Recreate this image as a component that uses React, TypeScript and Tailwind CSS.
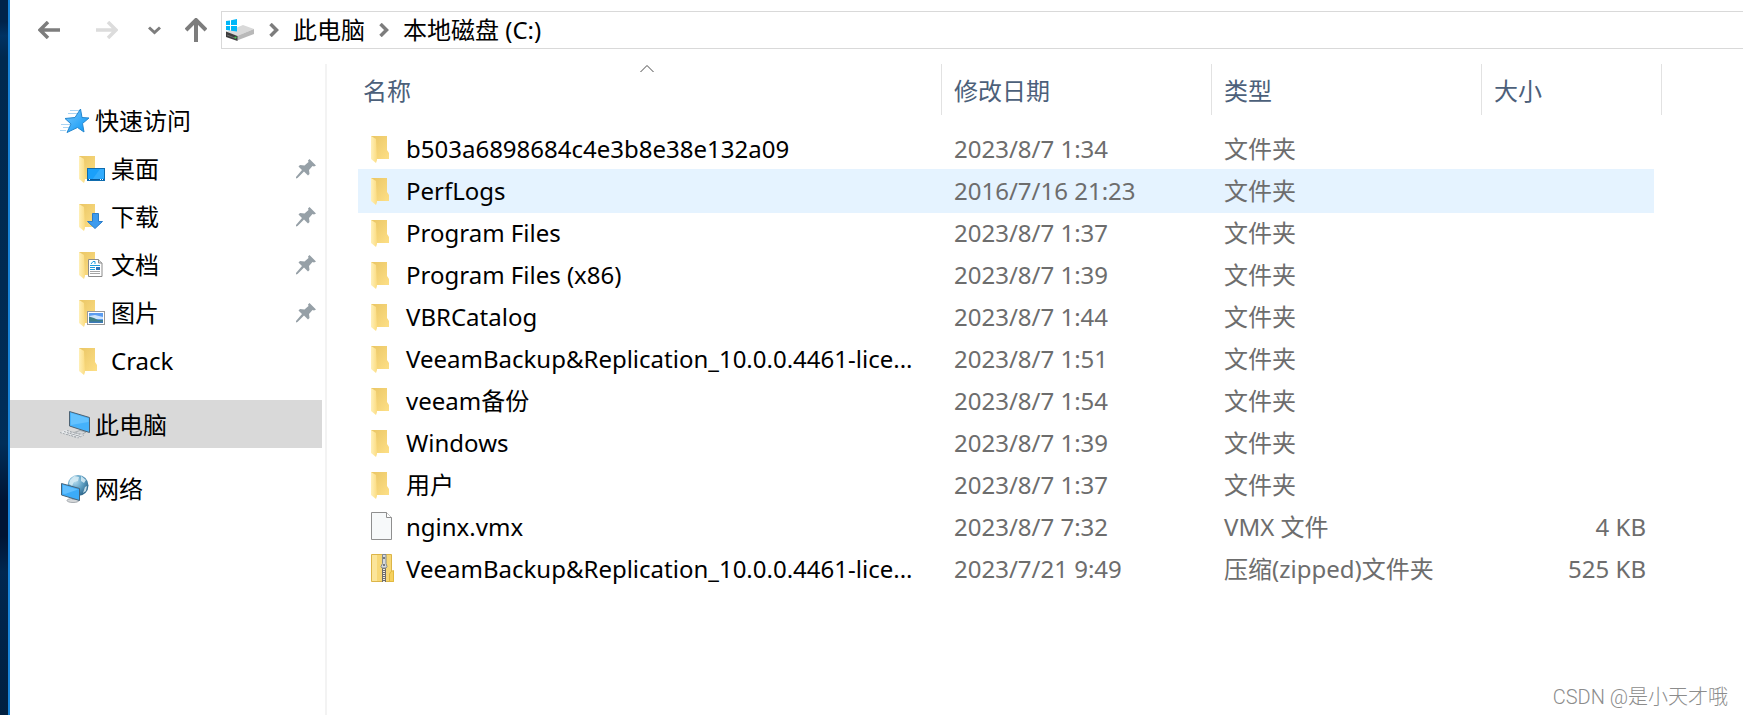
import { useId, useState } from "react";
import type { ReactNode } from "react";

type EntryKind = "folder" | "file" | "zip";

type Entry = {
  name: string;
  modified: string;
  type: string;
  size?: string;
  kind: EntryKind;
};

const entries: Entry[] = [
  { name: "b503a6898684c4e3b8e38e132a09", modified: "2023/8/7 1:34", type: "文件夹", kind: "folder" },
  { name: "PerfLogs", modified: "2016/7/16 21:23", type: "文件夹", kind: "folder" },
  { name: "Program Files", modified: "2023/8/7 1:37", type: "文件夹", kind: "folder" },
  { name: "Program Files (x86)", modified: "2023/8/7 1:39", type: "文件夹", kind: "folder" },
  { name: "VBRCatalog", modified: "2023/8/7 1:44", type: "文件夹", kind: "folder" },
  { name: "VeeamBackup&Replication_10.0.0.4461-lice...", modified: "2023/8/7 1:51", type: "文件夹", kind: "folder" },
  { name: "veeam备份", modified: "2023/8/7 1:54", type: "文件夹", kind: "folder" },
  { name: "Windows", modified: "2023/8/7 1:39", type: "文件夹", kind: "folder" },
  { name: "用户", modified: "2023/8/7 1:37", type: "文件夹", kind: "folder" },
  { name: "nginx.vmx", modified: "2023/8/7 7:32", type: "VMX 文件", size: "4 KB", kind: "file" },
  { name: "VeeamBackup&Replication_10.0.0.4461-lice...", modified: "2023/7/21 9:49", type: "压缩(zipped)文件夹", size: "525 KB", kind: "zip" },
];

function FolderIcon({ children }: { children?: ReactNode }) {
  const id = useId();
  return (
    <svg width="28" height="30" viewBox="0 -2 28 30" className="shrink-0" aria-hidden="true">
      <defs>
        <linearGradient id={`${id}b`} x1="0" y1="0" x2="1" y2="1">
          <stop offset="0" stopColor="#eac665" />
          <stop offset="1" stopColor="#fddf86" />
        </linearGradient>
        <linearGradient id={`${id}f`} x1="0" y1="0" x2="1" y2="0">
          <stop offset="0" stopColor="#fff0b8" />
          <stop offset="1" stopColor="#fbdc82" />
        </linearGradient>
      </defs>
      <path d="M0 0h16v14l2 3v6H0z" fill={`url(#${id}b)`} />
      <path d="M0 0l5 3 1 21-1 3-5-4z" fill={`url(#${id}f)`} />
      {children}
    </svg>
  );
}

function DesktopBadge() {
  return (
    <>
      <rect x="8.5" y="12.5" width="17" height="12" fill="#1aa0fb" stroke="#0f6cae" />
      <path d="M13 24L21 13h4v9z" fill="#45b4ff" opacity=".6" />
      <path d="M9 23.500h16" stroke="#0a5a9c" />
      <path d="M10 23.500h1M21 23.500h1M23 23.500h1" stroke="#fff" />
    </>
  );
}

function DownloadBadge() {
  return <path d="M13.500 9.500h6v8h4l-7.500 7-7.500-7h5z" fill="#3d9bee" stroke="#2a7dcb" />;
}

function DocumentBadge() {
  return (
    <>
      <path d="M9.500 7.500h10l3.500 3.500v13.500H9.500z" fill="#fff" stroke="#8b8b8b" />
      <path d="M19.500 7.500V11H23" fill="#ddd" stroke="#8b8b8b" />
      <path d="M12 12l2-2.500h2V12M11 13.500h10M11 15.500h5M11 17.500h5" stroke="#1e9bdc" fill="none" />
      <path d="M11 19.500h10M11 21.500h10" stroke="#a5a5a5" />
      <rect x="17" y="15" width="4" height="3" fill="#2d72b8" />
    </>
  );
}

function PictureBadge() {
  return (
    <>
      <rect x="8.500" y="11.500" width="17" height="13" fill="#fff" stroke="#999" />
      <rect x="10" y="13" width="14" height="10" fill="#5b9cf0" />
      <path d="M10 16l6-1 8 2v2H10z" fill="#cde4fb" />
      <path d="M10 16.500l5 1.500 4 2h5v3H10z" fill="#3f7f83" />
      <path d="M10 21.500h14V23H10z" fill="#3c79b9" />
    </>
  );
}

function FileIcon() {
  return (
    <svg width="22" height="30" viewBox="0 0 22 30" className="shrink-0" aria-hidden="true">
      <path d="M.5.5h15l5 5v22H.5z" fill="#f7f9fa" stroke="#8f8f8f" />
      <path d="M15.500.5v5h5" fill="#fff" stroke="#8f8f8f" />
    </svg>
  );
}

function ZipIcon() {
  return (
    <svg width="24" height="30" viewBox="0 0 24 30" className="shrink-0" aria-hidden="true">
      <path d="M.5.5h20V17l2 1v9.500H.5z" fill="#f7d877" stroke="#dcb548" />
      <path d="M1 1h5v26H1z" fill="#fbe59a" />
      <path d="M20 17.500l2.500-1v11H18.500V20z" fill="#f6d15e" stroke="#e2b93f" />
      <path d="M13 13v15" stroke="#6d6d6d" strokeWidth="4" />
      <path d="M13 13v15" stroke="#f4efe0" strokeWidth="2" strokeDasharray="1 1" />
      <path d="M11.500 .5h3.500v9l1 3-1 1.500h-4L10 12.500l1.500-3z" fill="#d6dade" stroke="#84898e" />
      <path d="M13 3v2M13 10v2" stroke="#55595d" strokeWidth="1.500" />
    </svg>
  );
}

function StarIcon() {
  return (
    <svg width="30" height="26" viewBox="0 0 30 26" aria-hidden="true">
      <defs>
        <linearGradient id="star" x1="0" y1="0" x2="1" y2="1">
          <stop offset="0" stopColor="#79c8fd" />
          <stop offset="1" stopColor="#0795f5" />
        </linearGradient>
      </defs>
      <path d="M10 2.500h10M8 5.500h9M1 16.500h9M3 19.500h6M0 22.500h6" stroke="#a9d4f3" />
      <path d="M20.500 1l1.500 8.500 7 .5-6.500 5.500 1.500 8.500-6.500-4.500L7 24.500l4-8.500L5 10.500l10-1z" fill="url(#star)" stroke="#2487cf" strokeLinejoin="round" />
    </svg>
  );
}

function ComputerIcon() {
  return (
    <svg width="32" height="30" viewBox="0 0 32 30" aria-hidden="true">
      <path d="M15 22.500l6-2 6 1.500-4 2.500z" fill="#d4d7da" stroke="#91969b" strokeWidth=".7" />
      <path d="M10.500 1.500l20 6v15l-20-6.500z" fill="#45b2fb" stroke="#4d6273" />
      <path d="M12 3l17.500 5.500V12L12 15z" fill="#6cc5ff" opacity=".8" />
      <path d="M1 22.500l5-2.500 19 5-6 3.500z" fill="#e7e9eb" />
      <path d="M1 22.500l18 5.500 6-3M5 21.500l16 5M8 20.500l14 4M8 24.500l6-2.500M12 25.500l6-2.500M15 27l6-2.500" stroke="#a4a9ae" strokeDasharray="2 1" fill="none" />
    </svg>
  );
}

function NetworkIcon() {
  return (
    <svg width="30" height="30" viewBox="0 0 30 30" aria-hidden="true">
      <defs>
        <radialGradient id="globe" cx=".35" cy=".3" r=".8">
          <stop offset="0" stopColor="#b5dcef" />
          <stop offset=".5" stopColor="#5d9fc3" />
          <stop offset="1" stopColor="#235b80" />
        </radialGradient>
      </defs>
      <circle cx="18" cy="11.500" r="10.500" fill="url(#globe)" />
      <path d="M10 6l4-4 5 1-1 4-4 1-2 4-3-2zM21 2l5 4-2 3-3-2zM25 13l2-1-1 5-3 2z" fill="#d8edf6" opacity=".85" />
      <ellipse cx="13" cy="26.500" rx="6" ry="2" fill="#d5d8da" stroke="#959ca2" strokeWidth=".8" />
      <path d="M12 23h3v3h-3z" fill="#b3b9be" />
      <path d="M1.500 9.500l18 5v12l-18-5.500z" fill="#3cabf8" stroke="#466379" />
      <path d="M3 11l15 4.500L5 20l-2-.5z" fill="#6bc4ff" opacity=".8" />
    </svg>
  );
}

function DriveIcon() {
  return (
    <svg width="30" height="24" viewBox="0 0 30 24" className="shrink-0" aria-hidden="true">
      <path d="M1 14L18 7l11 4-17 7z" fill="#d9d9d9" />
      <path d="M12 18l17-7v5l-17 6.500z" fill="#b9b9b9" />
      <path d="M1 13.500l11.500 4.500v5L1 19z" fill="#3c3c3c" />
      <path d="M2 17l9 3.500" stroke="#6b6b6b" />
      <path d="M9.500 19.500h2" stroke="#3ed24a" strokeWidth="1.500" />
      <path d="M1 3l4-.5V7H1zM6 2.300L12 1v6H6zM1 8h4v4.500L1 12zM6 8h6v5.500l-6-.8z" fill="#00b7f8" />
    </svg>
  );
}

function PinIcon() {
  return (
    <svg width="20" height="20" viewBox="0 0 20 20" className="shrink-0" aria-hidden="true">
      <path d="M13.500 0L20 6.500l-2 1-1.500-.5-3.500 4 .5 4-1.500 1.500-4-4L1.500 19 0 19.500V18l6-7L2.500 7.500 4 6l4.500.5 4-3.500-.5-1.500z" fill="#96a0a7" />
    </svg>
  );
}

function Chevron() {
  return (
    <svg width="10" height="14" viewBox="0 0 10 14" className="shrink-0" aria-hidden="true">
      <path d="M1.500 1l6 6-6 6" fill="none" stroke="#7d7d7d" strokeWidth="3.500" />
    </svg>
  );
}

const quickAccess = [
  { label: "桌面", badge: <DesktopBadge />, pinned: true },
  { label: "下载", badge: <DownloadBadge />, pinned: true },
  { label: "文档", badge: <DocumentBadge />, pinned: true },
  { label: "图片", badge: <PictureBadge />, pinned: true },
  { label: "Crack", badge: null, pinned: false },
];

const columns = ["修改日期", "类型"];

function NavRoot({ icon, label, active }: { icon: ReactNode; label: string; active?: boolean }) {
  return (
    <a
      href="#"
      aria-current={active ? "page" : undefined}
      className={`mr-[3px] flex h-12 items-center pt-0.5 pl-[47px] ${active ? "bg-[#d9d9d9]" : ""}`}
    >
      <span className="mr-0.5 flex w-9 shrink-0 justify-center">{icon}</span>
      {label}
    </a>
  );
}

function Toolbar() {
  return (
    <header className="flex h-16 items-start pt-[11px]">
      <nav className="flex h-[38px] w-[211px] shrink-0 items-center pl-7 text-[#7d7d7d]" aria-label="导航">
        <button type="button" aria-label="后退" className="mr-9">
          <svg width="22" height="18" viewBox="0 0 22 18">
            <path d="M22 9H2M10 1L2 9l8 8" fill="none" stroke="currentColor" strokeWidth="3.500" />
          </svg>
        </button>
        <button type="button" aria-label="前进" className="mr-[30px] text-[#dcdcdc]">
          <svg width="22" height="18" viewBox="0 0 22 18">
            <path d="M0 9h20M12 1l8 8-8 8" fill="none" stroke="currentColor" strokeWidth="3.500" />
          </svg>
        </button>
        <button type="button" aria-label="最近浏览的位置" className="mr-6">
          <svg width="13" height="9" viewBox="0 0 13 9">
            <path d="M1 1.500l5.500 5 5.500-5" fill="none" stroke="currentColor" strokeWidth="3" />
          </svg>
        </button>
        <button type="button" aria-label="上移">
          <svg width="22" height="24" viewBox="0 0 22 24">
            <path d="M11 24V2M1 12L11 2l10 10" fill="none" stroke="currentColor" strokeWidth="4" />
          </svg>
        </button>
      </nav>
      <div className="flex h-[38px] min-w-0 flex-1 items-center border border-r-0 border-[#d9d9d9] pl-[3px] whitespace-nowrap">
        <DriveIcon />
        <span className="flex w-[38px] justify-center">
          <Chevron />
        </span>
        <a href="#">此电脑</a>
        <span className="flex w-[38px] justify-center">
          <Chevron />
        </span>
        <a href="#">本地磁盘 (C:)</a>
      </div>
    </header>
  );
}

function Sidebar() {
  return (
    <nav className="w-[317px] shrink-0 border-r-2 border-[#f3f3f3] pt-8" aria-label="导航窗格">
      <NavRoot icon={<StarIcon />} label="快速访问" />
      {quickAccess.map((item) => (
        <a key={item.label} href="#" className="flex h-12 items-center pt-0.5 pr-[9px] pl-[69px]">
          <FolderIcon>{item.badge}</FolderIcon>
          <span className="ml-1 flex-1">{item.label}</span>
          {item.pinned && <PinIcon />}
        </a>
      ))}
      <div className="mt-4">
        <NavRoot icon={<ComputerIcon />} label="此电脑" active />
      </div>
      <div className="mt-4">
        <NavRoot icon={<NetworkIcon />} label="网络" />
      </div>
    </nav>
  );
}

function EntryIcon({ kind }: { kind: EntryKind }) {
  if (kind === "file") return <FileIcon />;
  if (kind === "zip") return <ZipIcon />;
  return <FolderIcon />;
}

function FileTable() {
  const [active, setActive] = useState(1);

  return (
    <table className="w-full table-fixed border-separate border-spacing-0 text-left whitespace-nowrap">
      <colgroup>
        <col />
        <col className="w-[270px]" />
        <col className="w-[270px]" />
        <col className="w-[173px]" />
        <col className="w-2" />
      </colgroup>
      <thead className="text-[#4c607a]">
        <tr>
          <th className="relative h-16 p-0 align-top font-normal">
            <button type="button" className="flex h-[51px] w-full items-center pt-0.5 pl-[5px]">
              名称
            </button>
            <span className="absolute inset-x-0 top-0 flex justify-center pr-1.5">
              <svg width="14" height="9" viewBox="0 0 14 9" aria-hidden="true">
                <path d="M.5 8L7 1.500 13.500 8" fill="none" stroke="#4a4a4a" />
              </svg>
            </span>
          </th>
          {columns.map((column) => (
            <th key={column} className="h-16 p-0 align-top font-normal">
              <button type="button" className="flex h-[51px] w-full items-center border-l border-[#e2e2e2] pt-0.5 pl-3">
                {column}
              </button>
            </th>
          ))}
          <th colSpan={2} className="h-16 p-0 align-top font-normal">
            <button type="button" className="flex h-[51px] w-full items-center border-x border-[#e2e2e2] pt-0.5 pl-3">
              大小
            </button>
          </th>
        </tr>
      </thead>
      <tbody className="text-[#6d6d6d]">
        {entries.map((entry, i) => {
          const cell = i === active ? "h-[42px] p-0 bg-[#e5f3ff] shadow-[0_1px_0_#e5f3ff,0_-1px_0_#e5f3ff]" : "h-[42px] p-0";
          return (
            <tr key={i} onClick={() => setActive(i)}>
              <td className={cell}>
                <div className="flex items-center pl-[13px] text-black">
                  <span className="flex w-[35px] shrink-0">
                    <EntryIcon kind={entry.kind} />
                  </span>
                  {entry.name}
                </div>
              </td>
              <td className={cell}>
                <div className="pl-[13px]">{entry.modified}</div>
              </td>
              <td className={cell}>
                <div className="pl-[13px]">{entry.type}</div>
              </td>
              <td className={cell}>
                <div className="pr-2 text-right">{entry.size}</div>
              </td>
            </tr>
          );
        })}
      </tbody>
    </table>
  );
}

export default function App() {
  return (
    <div className="relative flex min-h-screen bg-white font-['Noto_Sans','Noto_Sans_CJK_SC',sans-serif] text-2xl leading-8 text-black">
      {/* strip of desktop wallpaper left of the window */}
      <div className="w-2 shrink-0 bg-[linear-gradient(#00234a,#00234a_3%,#003263_5%,#00294f_8%,#002a52_40%,#002e5a_62%,#001433_70%,#001433_75%,#002750_80%,#001f40)]" />
      <div className="flex min-w-0 flex-1 flex-col border-l-2 border-[#1883d7]">
        <Toolbar />
        <div className="flex flex-1">
          <Sidebar />
          <main className="min-w-0 flex-1 pr-[81px] pl-[31px]">
            <FileTable />
          </main>
        </div>
      </div>
      <p className="absolute right-[15px] bottom-1 font-['Roboto','Noto_Sans_CJK_SC',sans-serif] text-xl font-light text-[#8c8c8c]">
        CSDN @是小天才哦
      </p>
    </div>
  );
}
